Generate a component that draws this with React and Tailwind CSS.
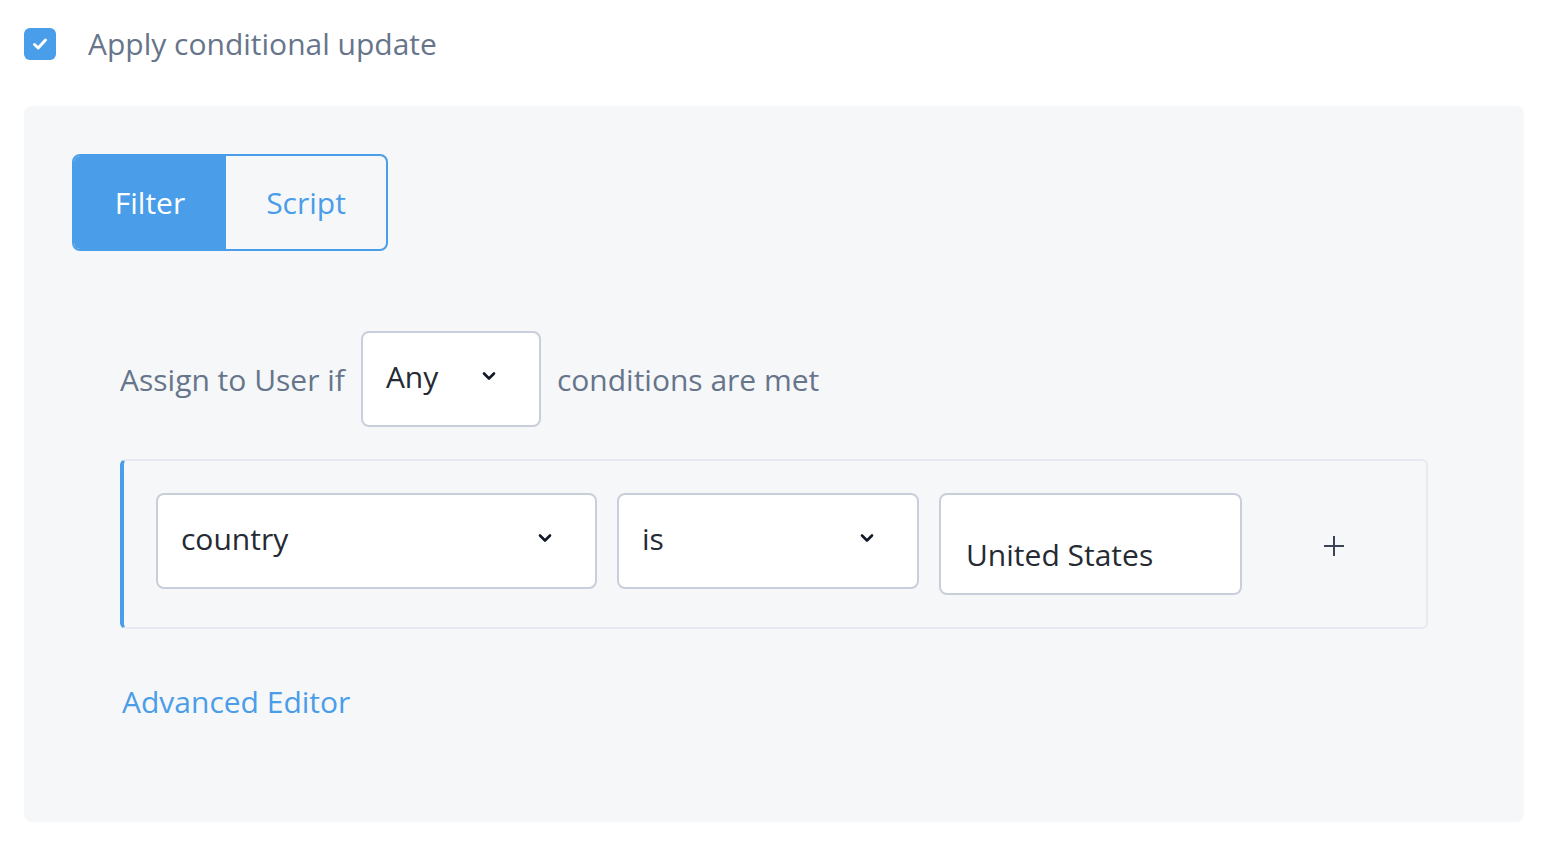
import React, { useState } from "react";

const Chevron = () => (
  <svg width="14" height="10" viewBox="0 0 14 10" className="shrink-0 mb-[6px]">
    <polyline points="2,2.5 7,7.5 12,2.5" fill="none" stroke="#111827" strokeWidth="2.6" strokeLinecap="round" strokeLinejoin="round" />
  </svg>
);

const Select = ({ value, className }) => (
  <div className={`flex items-center justify-between h-[96px] pl-[23px] bg-white border-2 border-[#c9cfda] rounded-lg text-[#252a33] ${className}`}>
    <span className="mb-[4px]">{value}</span>
    <Chevron />
  </div>
);

export default function App() {
  const [checked, setChecked] = useState(true);
  const [tab, setTab] = useState("filter");

  return (
    <div className="w-[1554px] h-[850px] bg-white pt-[28px] px-[24px] text-[30px] leading-[40px]" style={{ fontFamily: '"Open Sans", sans-serif' }}>
      {/* header checkbox */}
      <label className="flex items-center gap-[32px] h-[32px]">
        <button
          onClick={() => setChecked(!checked)}
          className="w-[32px] h-[32px] rounded-[6px] bg-[#4a9de8] flex items-center justify-center"
        >
          {checked && (
            <svg width="16" height="14" viewBox="0 0 16 14">
              <polyline points="2.5,7.5 6.2,11 13.5,3" fill="none" stroke="white" strokeWidth="3" strokeLinecap="round" strokeLinejoin="round" />
            </svg>
          )}
        </button>
        <span className="text-[#67758b] -mt-[1px]">Apply conditional update</span>
      </label>

      {/* panel */}
      <div className="mt-[46px] h-[716px] w-[1500px] bg-[#f6f7f9] rounded-lg p-[48px]">
        <div className="flex w-[316px] h-[97px] border-2 border-[#4a9de8] rounded-lg overflow-hidden">
          <button
            onClick={() => setTab("filter")}
            className={`w-[152px] flex items-center justify-center ${tab === "filter" ? "bg-[#4a9de8] text-white" : "text-[#4a9de8]"}`}
          >
            Filter
          </button>
          <button
            onClick={() => setTab("script")}
            className={`flex-1 flex items-center justify-center ${tab === "script" ? "bg-[#4a9de8] text-white" : "text-[#4a9de8]"}`}
          >
            Script
          </button>
        </div>

        <div className="pl-[48px] mt-[80px]">
          <div className="flex items-center gap-[16px] text-[#67758b]">
            <span className="mt-[2px]">Assign to User if</span>
            <Select value="Any" className="w-[180px] pr-[43px]" />
            <span className="mt-[2px]">conditions are met</span>
          </div>

          <div className="mt-[32px] w-[1308px] border-2 border-l-4 border-[#e6e9ef] border-l-[#4a9de8] rounded-[6px] pt-[32px] pb-[32px] pl-[32px] flex items-start gap-[20px]">
            <Select value="country" className="w-[441px] pr-[43px]" />
            <Select value="is" className="w-[302px] pr-[43px]" />
            <div className="w-[303px] h-[102px] bg-white border-2 border-[#c9cfda] rounded-lg pl-[25px] pt-[40px] text-[#252a33]">
              United States
            </div>
            <button className="ml-[52px] mt-[33px] w-[40px] h-[40px] flex items-center justify-center">
              <svg width="22" height="22" viewBox="0 0 22 22">
                <path d="M11 1v20M1 11h20" stroke="#3b4456" strokeWidth="2" />
              </svg>
            </button>
          </div>

          <a href="#" className="block mt-[53px] text-[#4a9de8] pl-[2px]">Advanced Editor</a>
        </div>
      </div>
    </div>
  );
}
